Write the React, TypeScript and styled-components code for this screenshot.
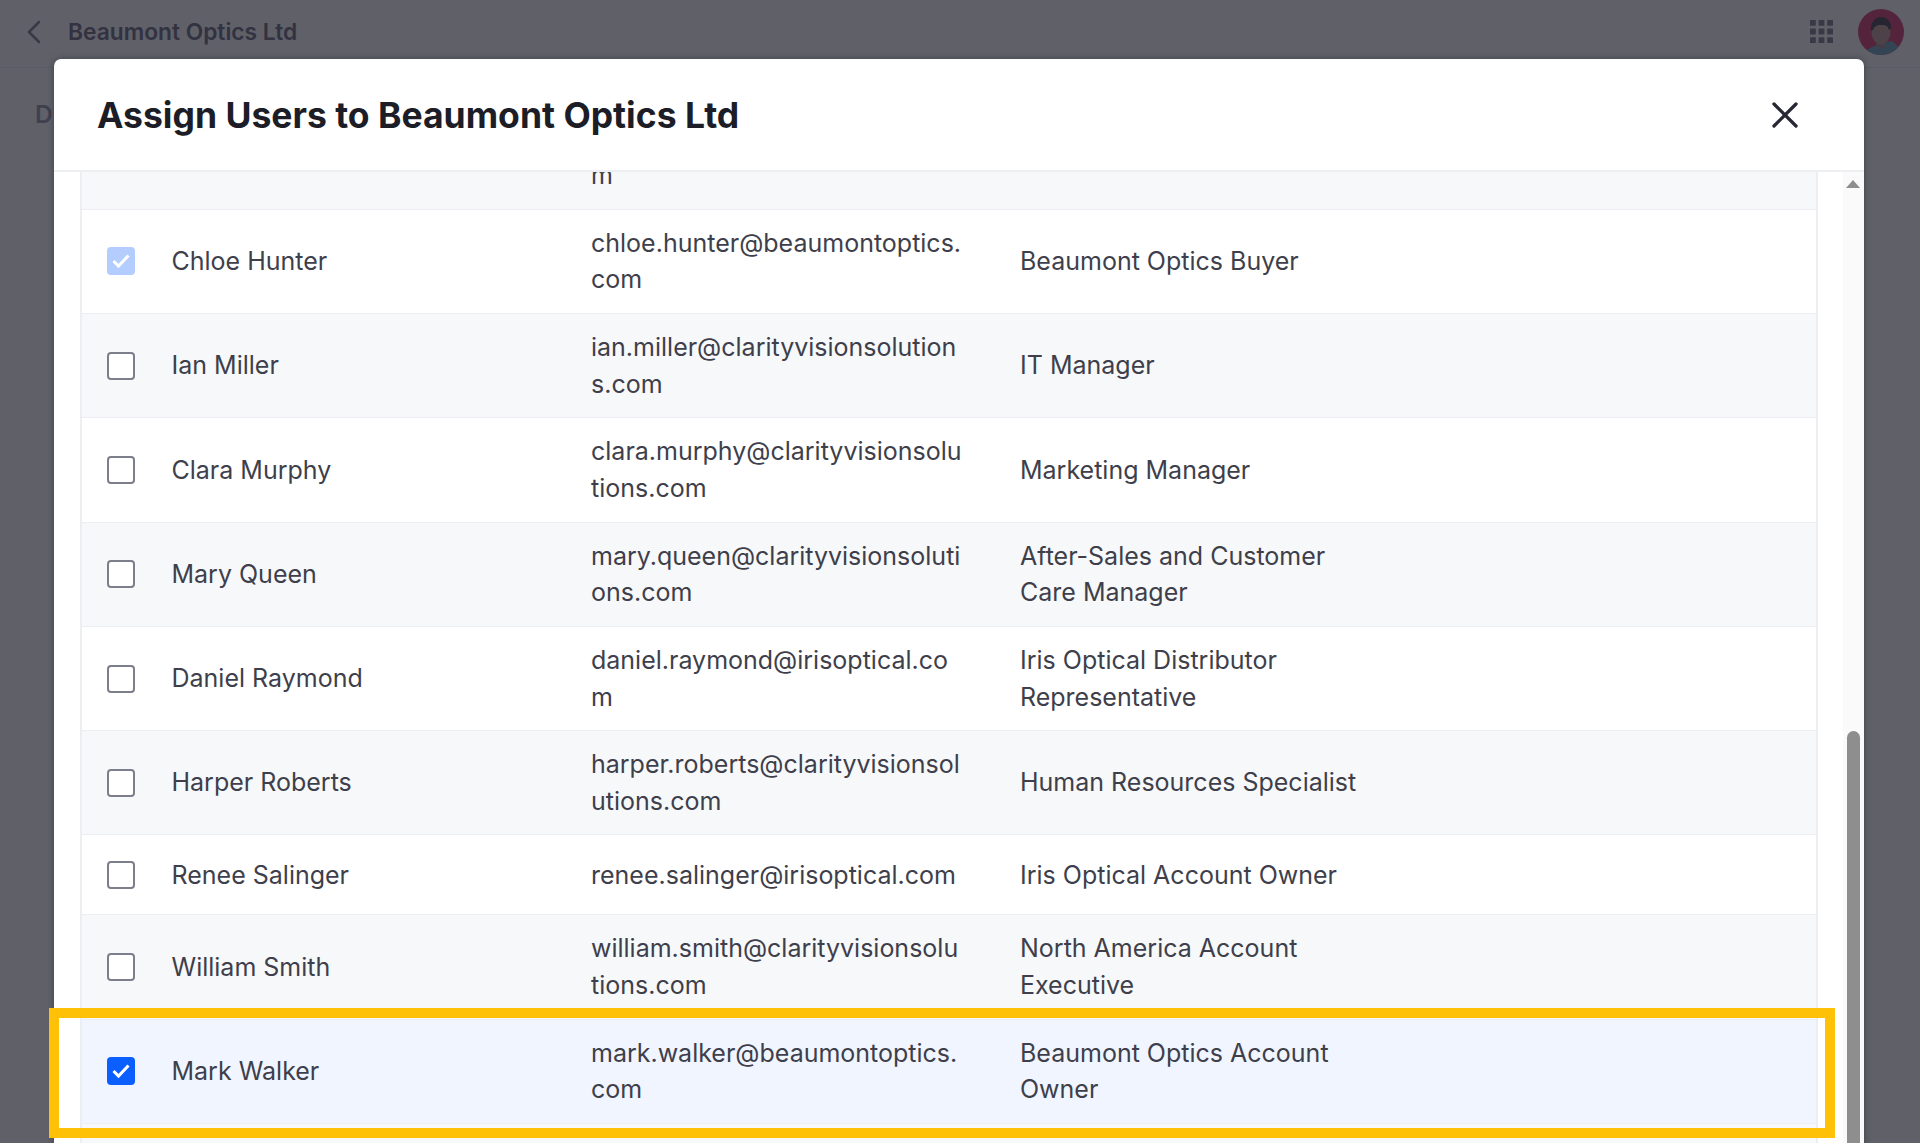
import styled, { createGlobalStyle } from "styled-components";
import { ChevronLeft, X } from "lucide-react";

const GlobalStyle = createGlobalStyle`
  html, body {
    margin: 0;
    padding: 0;
    background: #fff;
  }

  * {
    box-sizing: border-box;
  }
`;

const Page = styled.div`
  position: relative;
  width: 1920px;
  height: 1143px;
  overflow: hidden;
  background: #fff;
  font-family: Inter, "Liberation Sans", sans-serif;
`;

const TopBar = styled.header`
  display: flex;
  align-items: center;
  height: 68px;
  padding: 0 16px 4px 14px;
  border-bottom: 1px solid #f1f1f4;
  color: #8d8d9c;
`;

const PageTitle = styled.span`
  margin-left: 14px;
  font-size: 22.75px;
  font-weight: 600;
  color: #7c7d8d;
`;

const TopBarRight = styled.div`
  display: flex;
  align-items: center;
  gap: 25px;
  margin-left: auto;
`;

const SubHeading = styled.div`
  padding: 31px 0 0 35px;
  font-size: 24.5px;
  font-weight: 600;
  color: #a2a3ae;
`;

const Backdrop = styled.div`
  position: absolute;
  inset: 0;
  display: flex;
  align-items: flex-start;
  padding: 59px 56px 0 54px;
  background: rgba(10, 10, 25, 0.65);
`;

const Modal = styled.section`
  width: 100%;
  height: 1120px;
  overflow: hidden;
  background: #fff;
  border-radius: 7px 7px 0 0;
  box-shadow: 0 0 6px rgba(0, 0, 0, 0.35);
`;

const ModalHeader = styled.div`
  display: flex;
  align-items: center;
  justify-content: space-between;
  height: 113px;
  padding: 0 57px 0 43px;
  border-bottom: 2px solid #eeeff2;
`;

const ModalTitle = styled.h2`
  margin: 2px 0 0;
  font-size: 35.5px;
  font-weight: 700;
  color: #1c1d26;
`;

const CloseButton = styled.button`
  display: flex;
  padding: 0;
  border: none;
  background: none;
  color: #272833;
`;

const ModalBody = styled.div`
  display: flex;
  height: 1005px;
  padding-left: 26px;
`;

const TableClip = styled.div`
  width: 1738px;
  overflow: hidden;
  border: solid #eceef2;
  border-width: 0 2px;
`;

const Rows = styled.div`
  margin-top: -66.5px;
`;

const Row = styled.div<{ $tone: "plain" | "shaded" | "selected" }>`
  display: grid;
  grid-template-columns: 484px 429px 1fr;
  align-items: center;
  min-height: 80px;
  padding: 14.9px 0 14.9px 25px;
  border-bottom: 1.75px solid #eceef2;
  font-size: 25px;
  line-height: 36.75px;
  color: #3e3f4b;
  background: ${({ $tone }) =>
    $tone === "selected" ? "#f0f5ff" : $tone === "shaded" ? "#f7f8f9" : "#fff"};
`;

const NameCell = styled.div`
  display: flex;
  align-items: center;
  gap: 36.5px;
`;

const Box = styled.span<{ $state: "off" | "on" | "locked" }>`
  display: flex;
  align-items: center;
  justify-content: center;
  flex: none;
  width: 28px;
  height: 28px;
  border-radius: 4px;
  border: ${({ $state }) => ($state === "off" ? "2px solid #7d7e8c" : "none")};
  background: ${({ $state }) =>
    $state === "on" ? "#0b5fff" : $state === "locked" ? "#b3cdff" : "#fff"};
`;

const TextCell = styled.div`
  white-space: pre-line;
`;

const ScrollTrack = styled.div`
  display: flex;
  flex-direction: column;
  align-items: center;
  width: 21px;
  margin-left: 25px;
  padding: 8px 1px 0 0;
  background: #fafafa;
`;

const ScrollThumb = styled.div`
  width: 13px;
  height: 446px;
  margin-top: auto;
  border-radius: 7px 7px 0 0;
  background: #8e8e8e;
`;

const Highlight = styled.div`
  position: absolute;
  left: 49px;
  top: 1008px;
  width: 1786px;
  height: 130px;
  border: 10px solid #ffc107;
  pointer-events: none;
`;

type BoxState = "off" | "on" | "locked";

type User = {
  name: string;
  email: string;
  role: string;
  state: BoxState;
  tone: "plain" | "shaded" | "selected";
};

const users: User[] = [
  { name: "", email: "\u00a0\nm", role: "", state: "off", tone: "shaded" },
  {
    name: "Chloe Hunter",
    email: "chloe.hunter@beaumontoptics.\ncom",
    role: "Beaumont Optics Buyer",
    state: "locked",
    tone: "plain",
  },
  {
    name: "Ian Miller",
    email: "ian.miller@clarityvisionsolution\ns.com",
    role: "IT Manager",
    state: "off",
    tone: "shaded",
  },
  {
    name: "Clara Murphy",
    email: "clara.murphy@clarityvisionsolu\ntions.com",
    role: "Marketing Manager",
    state: "off",
    tone: "plain",
  },
  {
    name: "Mary Queen",
    email: "mary.queen@clarityvisionsoluti\nons.com",
    role: "After-Sales and Customer\nCare Manager",
    state: "off",
    tone: "shaded",
  },
  {
    name: "Daniel Raymond",
    email: "daniel.raymond@irisoptical.co\nm",
    role: "Iris Optical Distributor\nRepresentative",
    state: "off",
    tone: "plain",
  },
  {
    name: "Harper Roberts",
    email: "harper.roberts@clarityvisionsol\nutions.com",
    role: "Human Resources Specialist",
    state: "off",
    tone: "shaded",
  },
  {
    name: "Renee Salinger",
    email: "renee.salinger@irisoptical.com",
    role: "Iris Optical Account Owner",
    state: "off",
    tone: "plain",
  },
  {
    name: "William Smith",
    email: "william.smith@clarityvisionsolu\ntions.com",
    role: "North America Account\nExecutive",
    state: "off",
    tone: "shaded",
  },
  {
    name: "Mark Walker",
    email: "mark.walker@beaumontoptics.\ncom",
    role: "Beaumont Optics Account\nOwner",
    state: "on",
    tone: "selected",
  },
  { name: "", email: "\u00a0", role: "", state: "off", tone: "shaded" },
];

function CheckMark() {
  return (
    <svg width="20" height="20" viewBox="0 0 20 20" fill="none">
      <path d="M2.5 10l5 5 10-10.5" stroke="#fff" strokeWidth="3" />
    </svg>
  );
}

function AppsIcon() {
  const cells = [0, 1, 2];
  return (
    <svg width="23" height="23" viewBox="0 0 23 23">
      {cells.map((row) =>
        cells.map((col) => (
          <rect key={`${row}-${col}`} x={col * 8.6} y={row * 8.6} width="5.8" height="5.8" fill="#8d8d9c" rx="0.6" />
        )),
      )}
    </svg>
  );
}

function Avatar() {
  return (
    <svg width="46" height="46" viewBox="0 0 46 46">
      <defs>
        <clipPath id="avatar-clip">
          <circle cx="23" cy="23" r="23" />
        </clipPath>
      </defs>
      <g clipPath="url(#avatar-clip)">
        <rect width="46" height="46" fill="#d9557f" />
        <path d="M6 46c2-6 9-9 15-10l12-4c5 2 8 6 10 14z" fill="#7fb2c2" />
        <path d="M18 32h10l-1 6-4 2-5-3z" fill="#b09c98" />
        <ellipse cx="23" cy="23" rx="9.5" ry="12.5" fill="#c8aaa0" />
        <path d="M13 22c-1-8 4-14 10-14s10 4 10 11l-2 2c-1-4-3-5-8-5s-7 2-8 5z" fill="#5c5762" />
      </g>
    </svg>
  );
}

export default function App() {
  return (
    <Page>
      <GlobalStyle />
      <TopBar>
        <ChevronLeft size={40} strokeWidth={1.5} />
        <PageTitle>Beaumont Optics Ltd</PageTitle>
        <TopBarRight>
          <AppsIcon />
          <Avatar />
        </TopBarRight>
      </TopBar>
      <SubHeading>D</SubHeading>
      <Backdrop>
        <Modal>
          <ModalHeader>
            <ModalTitle>Assign Users to Beaumont Optics Ltd</ModalTitle>
            <CloseButton aria-label="Close">
              <X size={44} strokeWidth={1.8} />
            </CloseButton>
          </ModalHeader>
          <ModalBody>
            <TableClip>
              <Rows>
                {users.map((user, index) => (
                  <Row key={index} $tone={user.tone}>
                    <NameCell>
                      {user.name && (
                        <Box $state={user.state}>{user.state !== "off" && <CheckMark />}</Box>
                      )}
                      {user.name}
                    </NameCell>
                    <TextCell>{user.email}</TextCell>
                    <TextCell>{user.role}</TextCell>
                  </Row>
                ))}
              </Rows>
            </TableClip>
            <ScrollTrack>
              <svg width="14" height="8" viewBox="0 0 14 8">
                <path d="M7 0l7 8H0z" fill="#8e8e8e" />
              </svg>
              <ScrollThumb />
            </ScrollTrack>
          </ModalBody>
        </Modal>
      </Backdrop>
      <Highlight />
    </Page>
  );
}
